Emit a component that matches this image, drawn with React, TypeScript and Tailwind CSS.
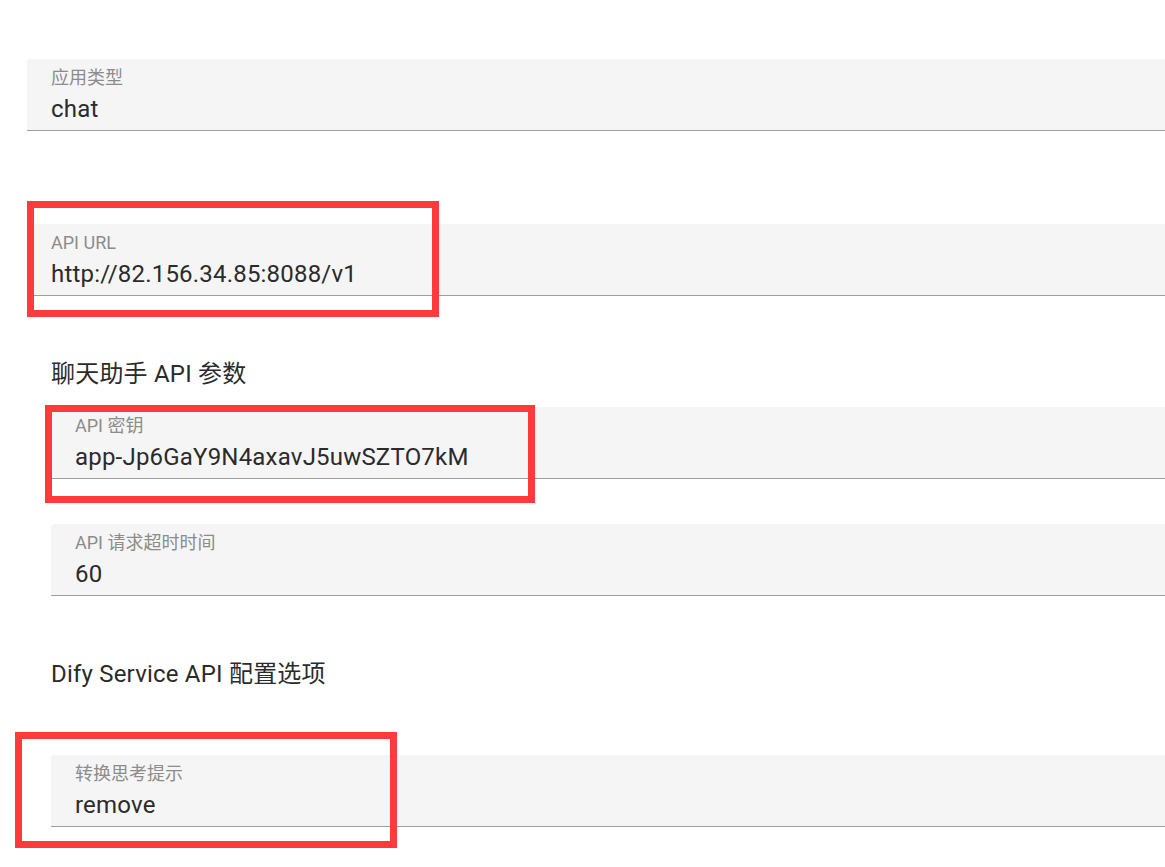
import React from "react";

const font = { fontFamily: 'Roboto, "Noto Sans CJK SC", sans-serif' };

function Field({ label, value, indent }: { label: string; value: string; indent?: boolean }) {
  return (
    <div
      className={`flex flex-col gap-[3px] h-[72px] pt-[7px] pl-[24px] rounded-t-[4px] bg-[#f5f5f5] border-b border-[#9e9e9e] ${indent ? "ml-[51px]" : "ml-[27px]"} mr-[-20px]`}
    >
      <div className="text-[18px] leading-[24px] text-[#8c8c8c]">{label}</div>
      <div className="text-[24px] leading-[32px] tracking-[0.2px] text-[#2b2b2b]">{value}</div>
    </div>
  );
}

function RedBox({ className }: { className: string }) {
  return <div className={`absolute border-[7px] border-[#fd3a3c] pointer-events-none ${className}`} />;
}

export default function App() {
  return (
    <div className="relative w-[1165px] h-[867px] overflow-hidden bg-white" style={font}>
      <div className="flex flex-col pt-[59px]">
        <Field label="应用类型" value="chat" />
        <div className="mt-[93px]">
          <Field label="API URL" value="http://82.156.34.85:8088/v1" />
        </div>
        <div className="mt-[62px] ml-[51px] text-[24px] leading-[32px] tracking-[0.2px] text-[#2b2b2b]">聊天助手 API 参数</div>
        <div className="mt-[17px]">
          <Field indent label="API 密钥" value="app-Jp6GaY9N4axavJ5uwSZTO7kM" />
        </div>
        <div className="mt-[45px]">
          <Field indent label="API 请求超时时间" value="60" />
        </div>
        <div className="mt-[62px] ml-[51px] text-[24px] leading-[32px] tracking-[0.2px] text-[#2b2b2b]">Dify Service API 配置选项</div>
        <div className="mt-[65px]">
          <Field indent label="转换思考提示" value="remove" />
        </div>
      </div>
      <RedBox className="left-[27px] top-[201px] w-[412px] h-[116px]" />
      <RedBox className="left-[45px] top-[405px] w-[490px] h-[98px]" />
      <RedBox className="left-[15px] top-[732px] w-[382px] h-[116px]" />
    </div>
  );
}
